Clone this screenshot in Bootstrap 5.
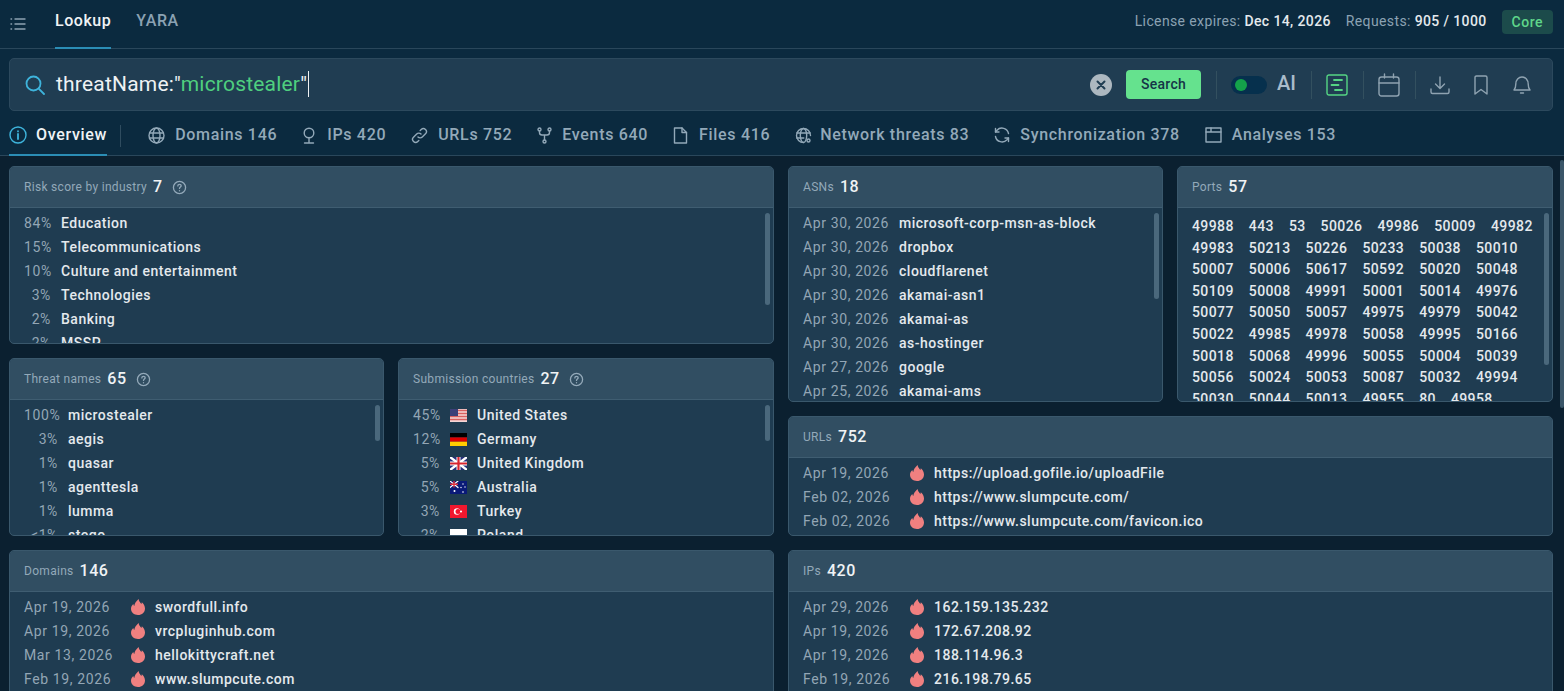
<!DOCTYPE html>
<html>
<head>
  <meta charset="UTF-8">
  <meta name="viewport" content="width=device-width, initial-scale=1">
  <title>Threat lookup</title>
  <link rel="stylesheet" href="https://cdn.jsdelivr.net/npm/bootstrap@5.3.3/dist/css/bootstrap.min.css">
  <style>
    html, body { height: 100%; overflow: hidden; }
    body { background: #0b2030; color: #e4e9ed; font-family: Roboto, "Liberation Sans", sans-serif; font-size: 14px; letter-spacing: .5px; }
    svg { display: block; flex: none; fill: none; stroke: currentColor; stroke-width: 1.4; stroke-linecap: round; stroke-linejoin: round; }
    .top-bar { height: 49px; background: #0b2a3f; border-bottom: 1px solid #2a475b; padding: 0 11px 0 10px; }
    .menu-ic { color: #8ea3b3; margin-right: 29px; }
    .top-tab { height: 48px; padding-top: 8px; margin-right: 25px; color: #8ba2b3; font-size: 16px; font-weight: 500; letter-spacing: .55px; border-bottom: 2px solid transparent; margin-bottom: -1px; }
    .top-tab.on { color: #f0f3f5; border-bottom-color: #2b8db5; }
    .meta { color: #8ba2b3; margin-right: 15px; padding-bottom: 6px; letter-spacing: .38px; }
    .meta b { color: #e4e9ed; font-weight: 500; }
    .core { background: #1c4b4b; color: #5fd68a; font-weight: 500; border-radius: 4px; padding: 3px 10px; height: 24px; line-height: 18px; margin-bottom: 4px; }
    .sub-head { background: #0b2a3f; padding: 9px 11px 0 9px; }
    .search-box { height: 53px; background: #203d52; border: 1px solid #2c495d; border-radius: 5px; padding: 0 20px 0 15px; }
    .search-ic { color: #3eb4dc; margin-right: 11px; }
    .query { font-size: 21px; letter-spacing: .2px; color: #eef2f4; border-right: 1px solid #eef2f4; line-height: 26px; padding-right: 1px; margin-bottom: 2px; }
    .query i { font-style: normal; color: #4fcf7f; }
    .clear-ic { margin-right: 14px; }
    .go-btn { background: #65e28e; color: #153447; border: 0; width: 75px; height: 29px; padding: 0; font-size: 14px; font-weight: 500; border-radius: 4px; letter-spacing: .3px; }
    .sep { width: 1px; height: 28px; background: #33505f; margin: 0 14.5px; }
    .switch-track { width: 36px; height: 18px; border-radius: 9px; background: #06304d; padding: 3px 4px; }
    .switch-dot { width: 12px; height: 12px; border-radius: 50%; background: #14a24a; }
    .ai-word { font-size: 20px; font-weight: 500; color: #a9bccb; letter-spacing: 0; margin-left: 10px; padding-bottom: 3px; }
    .tool { color: #8fa3b1; }
    .tool.lit { color: #55d584; }
    .tabs-row { height: 45px; border-bottom: 1px solid #2a475b; margin: 0 -11px 0 -9px; padding-left: 9px; }
    .tab-item { color: #93a9b9; font-size: 16px; font-weight: 500; letter-spacing: .68px; gap: 10px; height: 45px; padding-top: 5px; margin-right: 25px; margin-bottom: -1px; border-bottom: 2px solid transparent; }
    .tab-item.on { color: #f0f3f5; border-bottom-color: #2b8db5; margin-right: 13px; gap: 9px; }
    .tab-item.on svg { color: #3eb4dc; }
    .tab-item.tight { gap: 8px; }
    .tab-sep { width: 1px; height: 22px; background: #2f4c5f; margin: 5px 27px 0 0; }
    .board { display: grid; grid-template-columns: 765px 765px; gap: 14px; padding: 10px 0 0 9px; }
    .side { display: flex; flex-direction: column; gap: 14px; }
    .pair { display: flex; gap: 14px; }
    .panel { position: relative; background: #1f3c51; border: 1px solid #3a586c; border-radius: 5px; overflow: hidden; flex: none; min-width: 0; }
    .pair .panel { flex: 1 1 0; }
    .pair .panel:first-child { flex: 0 0 375px; }
    .panel-head { height: 41px; background: #314e62; border-bottom: 1px solid #3f5d71; padding: 0 14px; gap: 6px; color: #93a9b9; font-size: 12px; letter-spacing: .3px; }
    .panel-head b { color: #f0f3f5; font-size: 16px; font-weight: 500; letter-spacing: .5px; }
    .panel-head svg { margin-left: 3px; color: #93a9b9; }
    .rows { padding-top: 3px; }
    .item { height: 24px; padding-left: 14px; gap: 10px; font-weight: 500; color: #e4e9ed; white-space: nowrap; }
    .item span { color: #93a6b5; font-weight: 400; flex: none; letter-spacing: .62px; }
    .w-pct span { width: 27px; text-align: right; }
    .w-pct-lg span { width: 34px; text-align: right; }
    .w-date span { width: 86px; }
    .w-date-wide span { width: 97px; }
    .fire { width: 14px; height: 16px; fill: #f08080; stroke: none; }
    .flag { width: 17px; height: 13px; }
    .thumb { position: absolute; top: 46px; right: 3px; width: 5px; border-radius: 3px; background: #4a687c; }
    .thumb-risk { height: 92px; }
    .thumb-mid { height: 36px; }
    .thumb-asn { height: 86px; }
    .thumb-port { height: 152px; }
    .ports { padding: 8px 14px 0; column-gap: 15px; line-height: 21.6px; font-weight: 500; letter-spacing: .4px; }
    .h-mid { height: 178px; }
    .h-top { height: 236px; }
    .h-url { height: 120px; }
    .h-low { height: 200px; }
    .page-thumb { position: absolute; top: 160px; right: 0; width: 4px; height: 248px; background: #3a5568; border-radius: 2px; }
  </style>
</head>
<body>
  <svg width="0" height="0" class="position-absolute">
    <symbol id="fire" viewBox="0 0 14 16"><path d="M7.600 0c.3 2.300 1.500 3.500 2.700 4.900.3-.5.500-1.100.5-1.700C12.700 4.800 14 7 14 9.400 14 13.200 11 16 7 16S0 13.200 0 9.800c0-2.300 1.100-3.600 2.300-4.900.2 1 .5 1.600 1 2.100C3.600 4.200 5.200 2.200 7.600 0z"/></symbol>
    <symbol id="help" viewBox="0 0 16 16"><circle cx="8" cy="8" r="6.500"/><path d="M6.200 6.300c0-1 .8-1.700 1.800-1.700s1.800.7 1.800 1.600c0 1.300-1.800 1.400-1.800 2.800"/><path d="M8 11.300v.2"/></symbol>
  </svg>

  <div class="top-bar d-flex align-items-center">
    <svg class="menu-ic" width="16" height="14" viewBox="0 0 16 14"><path d="M5 2h10M5 7h10M5 12h10M1 2h.6M1 7h.6M1 12h.6"/></svg>
    <div class="top-tab on">Lookup</div>
    <div class="top-tab">YARA</div>
    <div class="ms-auto meta">License expires: <b>Dec 14, 2026</b></div>
    <div class="meta">Requests: <b>905 / 1000</b></div>
    <div class="core">Core</div>
  </div>

  <div class="sub-head">
    <div class="search-box d-flex align-items-center">
      <svg class="search-ic" width="20" height="20" viewBox="0 0 20 20"><circle cx="8.500" cy="8.500" r="7" stroke-width="1.800"/><path d="M13.700 13.700l5.300 5.300" stroke-width="1.800"/></svg>
      <div class="query">threatName:"<i>microstealer</i>"</div>
      <svg class="clear-ic ms-auto" width="22" height="22" viewBox="0 0 22 22"><circle cx="11" cy="11" r="11" fill="#adb8c0" stroke="none"/><path d="M7.500 7.500l7 7M14.500 7.500l-7 7" stroke="#203d52" stroke-width="2"/></svg>
      <button class="go-btn" type="button">Search</button>
      <div class="sep"></div>
      <div class="switch-track"><div class="switch-dot"></div></div>
      <div class="ai-word">AI</div>
      <div class="sep"></div>
      <svg class="tool lit" width="22" height="22" viewBox="0 0 22 22"><rect x="1" y="1" width="20" height="20" rx="2"/><path d="M8 6h8M5.500 11h7M9 16h7" stroke-width="1.800"/></svg>
      <div class="sep"></div>
      <svg class="tool" width="22" height="24" viewBox="0 0 22 24"><rect x="1" y="4" width="20" height="19" rx="2.500"/><path d="M1 10h20M6.500 1v4M15.500 1v4"/></svg>
      <div class="sep"></div>
      <svg class="tool" width="20" height="20" viewBox="0 0 20 20"><path d="M10 2v11M5.500 9l4.500 4.500L14.500 9M1 14v3c0 1 .7 1.500 1.500 1.500h15c.8 0 1.500-.5 1.500-1.500v-3"/></svg>
      <svg class="tool ms-4" width="14" height="20" viewBox="0 0 14 20"><path d="M1 2.500C1 1.500 1.600 1 2.500 1h9c.9 0 1.500.5 1.500 1.500V19l-6-4.500L1 19z"/></svg>
      <svg class="tool ms-4" width="20" height="20" viewBox="0 0 20 20"><path d="M2 15c1.200-1.300 1.800-2.500 1.800-6C3.800 5.200 6.500 2 10 2s6.200 3.200 6.200 7c0 3.500.6 4.700 1.800 6z"/><path d="M8.500 18h3"/></svg>
    </div>

    <div class="tabs-row d-flex align-items-center">
      <div class="tab-item on d-flex align-items-center">
        <svg width="18" height="18" viewBox="0 0 18 18"><circle cx="9" cy="9" r="8"/><path d="M9 8v5M9 5.200v.2" stroke-width="1.800"/></svg>Overview
      </div>
      <div class="tab-sep"></div>
      <div class="tab-item d-flex align-items-center">
        <svg width="17" height="17" viewBox="0 0 17 17"><circle cx="8.500" cy="8.500" r="7.500"/><ellipse cx="8.500" cy="8.500" rx="3.500" ry="7.500"/><path d="M1.500 6h14M1.500 11h14"/></svg>Domains 146
      </div>
      <div class="tab-item d-flex align-items-center">
        <svg width="15" height="17" viewBox="0 0 15 17"><circle cx="7" cy="6" r="4.800"/><path d="M7 11v4M2.500 16h9"/></svg>IPs 420
      </div>
      <div class="tab-item d-flex align-items-center">
        <svg width="17" height="17" viewBox="0 0 17 17"><path d="M7 10a3 3 0 0 0 4.300 0l3.200-3.200a3 3 0 0 0-4.300-4.300l-1 1"/><path d="M10 7a3 3 0 0 0-4.300 0l-3.200 3.200a3 3 0 0 0 4.300 4.300l1-1"/></svg>URLs 752
      </div>
      <div class="tab-item d-flex align-items-center">
        <svg width="15" height="17" viewBox="0 0 15 17"><circle cx="2.500" cy="2.500" r="1.500"/><circle cx="12.500" cy="2.500" r="1.500"/><circle cx="7.500" cy="14.500" r="1.500"/><path d="M2.500 4v1.500c0 1.500 1 2.500 2.500 2.500h5c1.500 0 2.500-1 2.500-2.500V4M7.500 8v5"/></svg>Events 640
      </div>
      <div class="tab-item d-flex align-items-center">
        <svg width="16" height="17" viewBox="0 0 16 17"><path d="M1.500 1H9l4.500 4.500V16h-12z"/><path d="M9 1v4.500h4.500"/></svg>Files 416
      </div>
      <div class="tab-item tight d-flex align-items-center">
        <svg width="17" height="17" viewBox="0 0 17 17"><path d="M15.500 8.500a7 7 0 1 0-7 7"/><ellipse cx="8.500" cy="8.500" rx="3.200" ry="7"/><path d="M1.800 6h13.400M1.800 11h7"/><circle cx="13.500" cy="13.500" r="1.500"/></svg>Network threats 83
      </div>
      <div class="tab-item d-flex align-items-center">
        <svg width="16" height="16" viewBox="0 0 16 16"><path d="M14.500 6.500A6.700 6.700 0 0 0 3 3.200L1.500 5"/><path d="M1.500 9.500A6.700 6.700 0 0 0 13 12.800L14.500 11"/><path d="M1.500 1.500V5H5M14.500 14.500V11H11"/></svg>Synchronization 378
      </div>
      <div class="tab-item d-flex align-items-center">
        <svg width="17" height="16" viewBox="0 0 17 16"><rect x="1" y="1" width="15" height="14"/><path d="M1 5h15M6 1v4"/></svg>Analyses 153
      </div>
    </div>
  </div>

  <div class="board">
    <div class="side">
      <div class="panel h-mid">
        <div class="panel-head d-flex align-items-center">Risk score by industry <b>7</b><svg width="15" height="15"><use href="#help"/></svg></div>
        <div class="rows">
          <div class="item w-pct d-flex align-items-center"><span>84%</span>Education</div>
          <div class="item w-pct d-flex align-items-center"><span>15%</span>Telecommunications</div>
          <div class="item w-pct d-flex align-items-center"><span>10%</span>Culture and entertainment</div>
          <div class="item w-pct d-flex align-items-center"><span>3%</span>Technologies</div>
          <div class="item w-pct d-flex align-items-center"><span>2%</span>Banking</div>
          <div class="item w-pct d-flex align-items-center"><span>2%</span>MSSP</div>
        </div>
        <div class="thumb thumb-risk"></div>
      </div>
      <div class="pair">
        <div class="panel h-mid">
          <div class="panel-head d-flex align-items-center">Threat names <b>65</b><svg width="15" height="15"><use href="#help"/></svg></div>
          <div class="rows">
            <div class="item w-pct-lg d-flex align-items-center"><span>100%</span>microstealer</div>
            <div class="item w-pct-lg d-flex align-items-center"><span>3%</span>aegis</div>
            <div class="item w-pct-lg d-flex align-items-center"><span>1%</span>quasar</div>
            <div class="item w-pct-lg d-flex align-items-center"><span>1%</span>agenttesla</div>
            <div class="item w-pct-lg d-flex align-items-center"><span>1%</span>lumma</div>
            <div class="item w-pct-lg d-flex align-items-center"><span>&lt;1%</span>stego</div>
          </div>
          <div class="thumb thumb-mid"></div>
        </div>
        <div class="panel h-mid">
          <div class="panel-head d-flex align-items-center">Submission countries <b>27</b><svg width="15" height="15"><use href="#help"/></svg></div>
          <div class="rows">
            <div class="item w-pct d-flex align-items-center"><span>45%</span>
              <svg class="flag" viewBox="0 0 17 13"><rect width="17" height="13" fill="#f4d6d6" stroke="none"/><path d="M0 1.500h17M0 4.500h17M0 7.500h17M0 10.500h17" stroke="#d96060" stroke-width="1.500" stroke-linecap="butt"/><rect width="8" height="7" fill="#3c3f78" stroke="none"/></svg>United States</div>
            <div class="item w-pct d-flex align-items-center"><span>12%</span>
              <svg class="flag" viewBox="0 0 17 13"><rect width="17" height="4.400" fill="#000" stroke="none"/><rect y="4.400" width="17" height="4.300" fill="#d00" stroke="none"/><rect y="8.700" width="17" height="4.300" fill="#fc0" stroke="none"/></svg>Germany</div>
            <div class="item w-pct d-flex align-items-center"><span>5%</span>
              <svg class="flag" viewBox="0 0 17 13"><rect width="17" height="13" fill="#26307a" stroke="none"/><path d="M0 0l17 13M17 0L0 13" stroke="#fff" stroke-width="2.400"/><path d="M8.500 0v13M0 6.500h17" stroke="#fff" stroke-width="4" stroke-linecap="butt"/><path d="M8.500 0v13M0 6.500h17" stroke="#d8242f" stroke-width="2.200" stroke-linecap="butt"/></svg>United Kingdom</div>
            <div class="item w-pct d-flex align-items-center"><span>5%</span>
              <svg class="flag" viewBox="0 0 17 13"><rect width="17" height="13" fill="#0a1a78" stroke="none"/><path d="M0 0l8 6.500M8 0L0 6.500" stroke="#fff" stroke-width="1.200"/><path d="M4 0v6.500M0 3.200h8" stroke="#e0303a" stroke-width="1.400" stroke-linecap="butt"/><circle cx="4.500" cy="10" r="1" fill="#fff" stroke="none"/><circle cx="13" cy="3" r=".7" fill="#fff" stroke="none"/><circle cx="11" cy="6.500" r=".7" fill="#fff" stroke="none"/><circle cx="15" cy="6" r=".7" fill="#fff" stroke="none"/><circle cx="13" cy="11" r=".8" fill="#fff" stroke="none"/></svg>Australia</div>
            <div class="item w-pct d-flex align-items-center"><span>3%</span>
              <svg class="flag" viewBox="0 0 17 13"><rect width="17" height="13" fill="#f0172e" stroke="none"/><circle cx="7" cy="6.500" r="3.200" fill="#fff" stroke="none"/><circle cx="8" cy="6.500" r="2.500" fill="#f0172e" stroke="none"/><circle cx="11" cy="6.500" r="1.100" fill="#fff" stroke="none"/></svg>Turkey</div>
            <div class="item w-pct d-flex align-items-center"><span>2%</span>
              <svg class="flag" viewBox="0 0 17 13"><rect width="17" height="6.500" fill="#fff" stroke="none"/><rect y="6.500" width="17" height="6.500" fill="#dc143c" stroke="none"/></svg>Poland</div>
          </div>
          <div class="thumb thumb-mid"></div>
        </div>
      </div>
      <div class="panel h-low">
        <div class="panel-head d-flex align-items-center">Domains <b>146</b></div>
        <div class="rows">
          <div class="item w-date-wide d-flex align-items-center"><span>Apr 19, 2026</span><svg class="fire"><use href="#fire"/></svg>swordfull.info</div>
          <div class="item w-date-wide d-flex align-items-center"><span>Apr 19, 2026</span><svg class="fire"><use href="#fire"/></svg>vrcpluginhub.com</div>
          <div class="item w-date-wide d-flex align-items-center"><span>Mar 13, 2026</span><svg class="fire"><use href="#fire"/></svg>hellokittycraft.net</div>
          <div class="item w-date-wide d-flex align-items-center"><span>Feb 19, 2026</span><svg class="fire"><use href="#fire"/></svg>www.slumpcute.com</div>
        </div>
      </div>
    </div>

    <div class="side">
      <div class="pair">
        <div class="panel h-top">
          <div class="panel-head d-flex align-items-center">ASNs <b>18</b></div>
          <div class="rows">
            <div class="item w-date d-flex align-items-center"><span>Apr 30, 2026</span>microsoft-corp-msn-as-block</div>
            <div class="item w-date d-flex align-items-center"><span>Apr 30, 2026</span>dropbox</div>
            <div class="item w-date d-flex align-items-center"><span>Apr 30, 2026</span>cloudflarenet</div>
            <div class="item w-date d-flex align-items-center"><span>Apr 30, 2026</span>akamai-asn1</div>
            <div class="item w-date d-flex align-items-center"><span>Apr 30, 2026</span>akamai-as</div>
            <div class="item w-date d-flex align-items-center"><span>Apr 30, 2026</span>as-hostinger</div>
            <div class="item w-date d-flex align-items-center"><span>Apr 27, 2026</span>google</div>
            <div class="item w-date d-flex align-items-center"><span>Apr 25, 2026</span>akamai-ams</div>
          </div>
          <div class="thumb thumb-asn"></div>
        </div>
        <div class="panel h-top">
          <div class="panel-head d-flex align-items-center">Ports <b>57</b></div>
          <div class="ports d-flex flex-wrap">
            <div>49988</div><div>443</div><div>53</div><div>50026</div><div>49986</div><div>50009</div><div>49982</div>
            <div>49983</div><div>50213</div><div>50226</div><div>50233</div><div>50038</div><div>50010</div>
            <div>50007</div><div>50006</div><div>50617</div><div>50592</div><div>50020</div><div>50048</div>
            <div>50109</div><div>50008</div><div>49991</div><div>50001</div><div>50014</div><div>49976</div>
            <div>50077</div><div>50050</div><div>50057</div><div>49975</div><div>49979</div><div>50042</div>
            <div>50022</div><div>49985</div><div>49978</div><div>50058</div><div>49995</div><div>50166</div>
            <div>50018</div><div>50068</div><div>49996</div><div>50055</div><div>50004</div><div>50039</div>
            <div>50056</div><div>50024</div><div>50053</div><div>50087</div><div>50032</div><div>49994</div>
            <div>50030</div><div>50044</div><div>50013</div><div>49955</div><div>80</div><div>49958</div>
          </div>
          <div class="thumb thumb-port"></div>
        </div>
      </div>
      <div class="panel h-url">
        <div class="panel-head d-flex align-items-center">URLs <b>752</b></div>
        <div class="rows">
          <div class="item w-date-wide d-flex align-items-center"><span>Apr 19, 2026</span><svg class="fire"><use href="#fire"/></svg>https://upload.gofile.io/uploadFile</div>
          <div class="item w-date-wide d-flex align-items-center"><span>Feb 02, 2026</span><svg class="fire"><use href="#fire"/></svg>https://www.slumpcute.com/</div>
          <div class="item w-date-wide d-flex align-items-center"><span>Feb 02, 2026</span><svg class="fire"><use href="#fire"/></svg>https://www.slumpcute.com/favicon.ico</div>
        </div>
      </div>
      <div class="panel h-low">
        <div class="panel-head d-flex align-items-center">IPs <b>420</b></div>
        <div class="rows">
          <div class="item w-date-wide d-flex align-items-center"><span>Apr 29, 2026</span><svg class="fire"><use href="#fire"/></svg>162.159.135.232</div>
          <div class="item w-date-wide d-flex align-items-center"><span>Apr 19, 2026</span><svg class="fire"><use href="#fire"/></svg>172.67.208.92</div>
          <div class="item w-date-wide d-flex align-items-center"><span>Apr 19, 2026</span><svg class="fire"><use href="#fire"/></svg>188.114.96.3</div>
          <div class="item w-date-wide d-flex align-items-center"><span>Feb 19, 2026</span><svg class="fire"><use href="#fire"/></svg>216.198.79.65</div>
        </div>
      </div>
    </div>
  </div>
  <div class="page-thumb"></div>

  <script src="https://cdn.jsdelivr.net/npm/bootstrap@5.3.3/dist/js/bootstrap.bundle.min.js"></script>
</body>
</html>
